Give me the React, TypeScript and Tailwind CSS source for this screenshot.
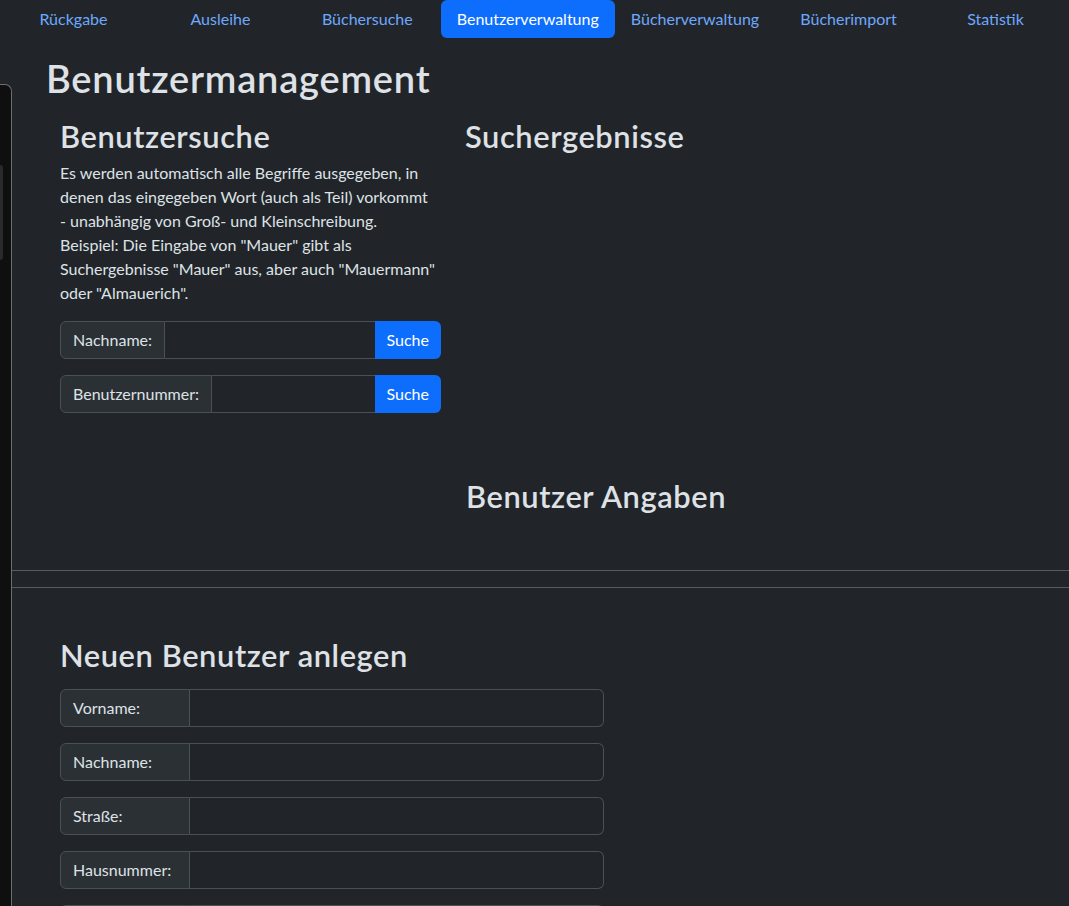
import React from "react";

const navItems = [
  "Rückgabe",
  "Ausleihe",
  "Büchersuche",
  "Benutzerverwaltung",
  "Bücherverwaltung",
  "Bücherimport",
  "Statistik",
];

const helpLines = [
  "Es werden automatisch alle Begriffe ausgegeben, in",
  "denen das eingegeben Wort (auch als Teil) vorkommt",
  "- unabhängig von Groß- und Kleinschreibung.",
  'Beispiel: Die Eingabe von "Mauer" gibt als',
  'Suchergebnisse "Mauer" aus, aber auch "Mauermann"',
  'oder "Almauerich".',
];

function SearchGroup({ label }: { label: string }) {
  return (
    <div className="flex h-[38px] mb-4">
      <div className="flex items-center px-3 bg-[#2b3035] border border-[#495057] rounded-l-[6px] whitespace-nowrap">
        {label}
      </div>
      <div className="flex-1 bg-[#212529] border-y border-[#495057]" />
      <button className="flex items-center px-3 bg-[#0d6efd] text-white rounded-r-[6px]">Suche</button>
    </div>
  );
}

function FieldGroup({ label }: { label: string }) {
  return (
    <div className="flex h-[38px] mb-4 w-[544px]">
      <div className="flex items-center w-[130px] shrink-0 px-3 bg-[#2b3035] border border-[#495057] rounded-l-[6px] whitespace-nowrap">
        {label}
      </div>
      <div className="flex-1 bg-[#212529] border-y border-r border-[#495057] rounded-r-[6px]" />
    </div>
  );
}

export default function App() {
  return (
    <div
      className="relative min-h-screen bg-[#212529] text-[#dee2e6] text-[16px] leading-6"
      style={{ fontFamily: "Lato, 'Liberation Sans', sans-serif" }}
    >
      <nav className="flex h-[38px]">
        {navItems.map((item) => {
          const active = item === "Benutzerverwaltung";
          return (
            <div
              key={item}
              className={
                active
                  ? "flex-1 flex items-center justify-center px-4 whitespace-nowrap rounded-[6px] bg-[#0d6efd] text-white"
                  : "flex-1 flex items-center justify-center px-4 whitespace-nowrap text-[#6ea8fe]"
              }
            >
              {item}
            </div>
          );
        })}
      </nav>

      <h1 className="ml-[46px] mt-[18px] mb-2 text-[38px] leading-[45.6px] font-semibold tracking-[0.8px]">
        Benutzermanagement
      </h1>

      <div className="flex pl-[48px]">
        <div className="w-[405px] px-3 shrink-0">
          <h2 className="mt-2 mb-[6px] text-[30.8px] leading-[37px] font-semibold tracking-[0.6px]">
            Benutzersuche
          </h2>
          <p className="mb-4">
            {helpLines.map((line) => (
              <span key={line} className="block whitespace-nowrap">
                {line}
              </span>
            ))}
          </p>
          <SearchGroup label="Nachname:" />
          <SearchGroup label="Benutzernummer:" />
        </div>
        <div className="flex-1 px-3">
          <h2 className="mt-2 mb-[7px] text-[30.8px] leading-[37px] font-semibold tracking-[0.6px]">
            Suchergebnisse
          </h2>
          <div className="h-[316px]" />
          <h2 className="mb-[7px] pl-px text-[30.8px] leading-[37px] font-semibold tracking-[0.6px]">
            Benutzer Angaben
          </h2>
        </div>
      </div>

      <div className="mt-[48px] h-px bg-[#575b60]" />
      <div className="mt-4 h-px bg-[#575b60]" />

      <div className="pl-[48px]">
        <div className="px-3">
          <h2 className="mt-[49px] mb-[15px] text-[30.8px] leading-[37px] font-semibold tracking-[0.6px]">
            Neuen Benutzer anlegen
          </h2>
          <FieldGroup label="Vorname:" />
          <FieldGroup label="Nachname:" />
          <FieldGroup label="Straße:" />
          <FieldGroup label="Hausnummer:" />
          <FieldGroup label="PLZ:" />
        </div>
      </div>

      <div className="absolute left-0 top-[84px] bottom-0 w-[12px] bg-[#0f0f10] border-t border-r border-[#6e6e6e] rounded-tr-[7px]">
        <div className="mt-[80px] w-[3px] h-[95px] bg-[#2a2a2b] rounded-r-[3px]" />
      </div>
    </div>
  );
}
